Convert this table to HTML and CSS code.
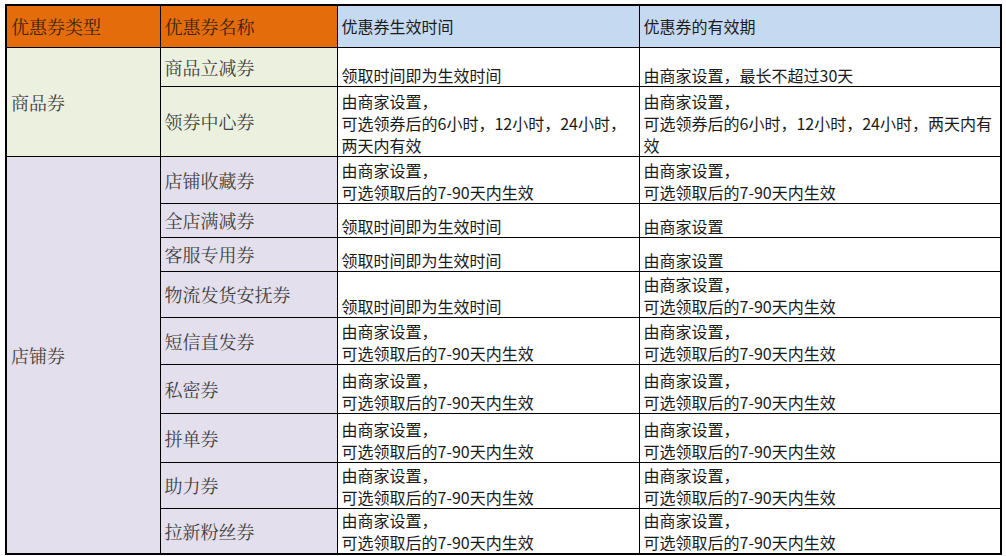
FILE: index.html
```html
<!DOCTYPE html>
<html lang="zh-CN">
<head>
<meta charset="utf-8">
<title>优惠券类型</title>
<link rel="stylesheet" href="styles.css">
</head>
<body>
<div class="sheet">
<table class="coupons">
  <colgroup>
    <col class="c1"><col class="c2"><col class="c3"><col class="c4">
  </colgroup>
  <thead>
    <tr class="h-head">
      <th class="orange">优惠券类型</th>
      <th class="orange">优惠券名称</th>
      <th class="blue">优惠券生效时间</th>
      <th class="blue">优惠券的有效期</th>
    </tr>
  </thead>
  <tbody>
    <tr class="h39">
      <td class="type green" rowspan="2">商品券</td>
      <td class="name green">商品立减券</td>
      <td class="txt">领取时间即为生效时间</td>
      <td class="txt">由商家设置，最长不超过30天</td>
    </tr>
    <tr class="h70">
      <td class="name green">领券中心券</td>
      <td class="txt">由商家设置，<br>可选领券后的6小时，12小时，24小时，<br>两天内有效</td>
      <td class="txt">由商家设置，<br>可选领券后的6小时，12小时，24小时，两天内有<br>效</td>
    </tr>
    <tr class="h47">
      <td class="type purple" rowspan="9">店铺券</td>
      <td class="name purple">店铺收藏券</td>
      <td class="txt">由商家设置，<br>可选领取后的7-90天内生效</td>
      <td class="txt">由商家设置，<br>可选领取后的7-90天内生效</td>
    </tr>
    <tr class="h34">
      <td class="name purple">全店满减券</td>
      <td class="txt">领取时间即为生效时间</td>
      <td class="txt">由商家设置</td>
    </tr>
    <tr class="h34">
      <td class="name purple">客服专用券</td>
      <td class="txt">领取时间即为生效时间</td>
      <td class="txt">由商家设置</td>
    </tr>
    <tr class="h46">
      <td class="name purple">物流发货安抚券</td>
      <td class="txt">领取时间即为生效时间</td>
      <td class="txt">由商家设置，<br>可选领取后的7-90天内生效</td>
    </tr>
    <tr class="h47">
      <td class="name purple">短信直发券</td>
      <td class="txt">由商家设置，<br>可选领取后的7-90天内生效</td>
      <td class="txt">由商家设置，<br>可选领取后的7-90天内生效</td>
    </tr>
    <tr class="h49">
      <td class="name purple">私密券</td>
      <td class="txt">由商家设置，<br>可选领取后的7-90天内生效</td>
      <td class="txt">由商家设置，<br>可选领取后的7-90天内生效</td>
    </tr>
    <tr class="h49">
      <td class="name purple">拼单券</td>
      <td class="txt">由商家设置，<br>可选领取后的7-90天内生效</td>
      <td class="txt">由商家设置，<br>可选领取后的7-90天内生效</td>
    </tr>
    <tr class="h46">
      <td class="name purple">助力券</td>
      <td class="txt">由商家设置，<br>可选领取后的7-90天内生效</td>
      <td class="txt">由商家设置，<br>可选领取后的7-90天内生效</td>
    </tr>
    <tr class="h45">
      <td class="name purple">拉新粉丝券</td>
      <td class="txt">由商家设置，<br>可选领取后的7-90天内生效</td>
      <td class="txt">由商家设置，<br>可选领取后的7-90天内生效</td>
    </tr>
  </tbody>
</table>
</div>
</body>
</html>
```

FILE: styles.css
```css
html, body {
  margin: 0;
  padding: 0;
  background: #ffffff;
}

.sheet {
  padding: 4px 0 0 5px;
}

.coupons {
  border-collapse: collapse;
  table-layout: fixed;
  width: 995px;
  border: 2px solid #000;
}

.c1 { width: 154px; }
.c2 { width: 177px; }
.c3 { width: 302px; }
.c4 { width: 362px; }

.coupons th,
.coupons td {
  border: 1.5px solid #000;
  padding: 0 4px;
  text-align: left;
  white-space: nowrap;
  overflow: hidden;
}

.coupons th {
  font-weight: normal;
  vertical-align: middle;
}

.h-head { height: 42px; }
.h34 { height: 34px; }
.h39 { height: 39px; }
.h45 { height: 45px; }
.h46 { height: 46px; }
.h47 { height: 47px; }
.h49 { height: 49px; }
.h70 { height: 70px; }

.orange {
  background: #e46c0a;
  color: #3b2410;
  font-family: "Noto Serif CJK SC", "Noto Sans CJK SC", serif;
  font-size: 18px;
  padding-left: 5px;
}

.blue {
  background: #c5d9f1;
  color: #1c1c1c;
  font-family: "Noto Sans CJK SC", sans-serif;
  font-size: 16px;
}

.type,
.name {
  font-family: "Noto Serif CJK SC", "Noto Sans CJK SC", serif;
  font-size: 18px;
  color: #3f3f3f;
  vertical-align: middle;
}

.type { padding-left: 5px; }

.green { background: #ebf1de; }
.purple { background: #e4dfec; }

.txt {
  background: #ffffff;
  font-family: "Noto Sans CJK SC", sans-serif;
  font-size: 16px;
  line-height: 22px;
  color: #1a1a1a;
  vertical-align: bottom;
  padding-bottom: 2px;
}
```
